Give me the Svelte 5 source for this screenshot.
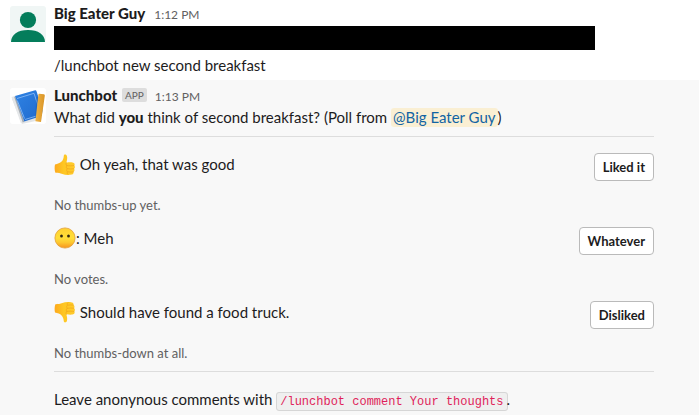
<script>
  const options = [
    { icon: 'up', label: ' Oh yeah, that was good', action: 'Liked it', votes: 'No thumbs-up yet.' },
    { icon: 'face', label: ': Meh', action: 'Whatever', votes: 'No votes.' },
    { icon: 'down', label: ' Should have found a food truck.', action: 'Disliked', votes: 'No thumbs-down at all.' }
  ];
</script>

{#snippet thumb(down)}
  <svg class="emoji" class:up={!down} viewBox="0 0 22 22" aria-hidden="true">
    <defs>
      <linearGradient id={down ? 'skinDown' : 'skinUp'} x1="0" y1="0" x2="1" y2="0">
        <stop offset="0" stop-color="#fda91e" />
        <stop offset=".45" stop-color="#fec723" />
        <stop offset="1" stop-color="#ffca2c" />
      </linearGradient>
    </defs>
    <g transform={down ? 'matrix(1 0 0 -1 0 22)' : undefined}>
      <path
        fill="url(#{down ? 'skinDown' : 'skinUp'})"
        d="M1 10.4C3.6 9.9 6.1 9.2 7.6 7.6C9 6 9.7 4 9.8 1.7C9.9.1 12.2.1 12.9 2C13.6 4.1 13 6.5 12.3 8.7C14.3 8.3 17 8.2 18.5 8.4C20.7 8.7 21.2 10.7 20.1 11.5C21.3 12.3 21.2 14 20 14.8C20.9 15.7 20.6 17.4 19.4 17.9C20 19 19.2 20.2 17.9 20.4C14.7 21.2 11 21 8.4 19.9C6.3 19 4.2 18.8 1.4 18.7C.5 16.6.4 12.9 1 10.4Z"
      />
      <path fill="none" stroke="#efa51a" stroke-width=".7" stroke-linecap="round"
        d="M12.3 8.7C11.7 9.5 11.7 10.8 12.7 11.4M13 11.6C15.4 12 18 11.9 20 11.5M12.7 11.6C12 12.5 12.2 14 13.1 14.7C15.3 15.1 17.9 15.1 19.8 14.8M13 14.9C12.4 15.9 12.6 17.2 13.4 17.8C15.5 18.2 17.7 18.1 19.3 17.9M13.4 18C13 18.7 13.1 19.7 13.9 20.3" />
    </g>
  </svg>
{/snippet}

{#snippet face()}
  <svg class="emoji" viewBox="0 0 22 22" aria-hidden="true">
    <defs>
      <linearGradient id="face" x1="0" y1="0" x2="0" y2="1">
        <stop offset="0" stop-color="#ffd02f" />
        <stop offset=".5" stop-color="#ffde3a" />
        <stop offset=".72" stop-color="#fdc830" />
        <stop offset="1" stop-color="#f7931e" />
      </linearGradient>
    </defs>
    <circle cx="11" cy="11" r="10.1" fill="url(#face)" stroke="#e2a03a" stroke-width=".8" />
    <ellipse cx="7.5" cy="9" rx="1.4" ry="1.6" fill="#302511" />
    <ellipse cx="14.5" cy="9" rx="1.4" ry="1.6" fill="#302511" />
  </svg>
{/snippet}

<main>
  <article class="message first">
    <svg class="avatar" viewBox="0 0 36 36" aria-hidden="true">
      <rect width="36" height="36" rx="3" fill="#f0f6f5" />
      <circle cx="18" cy="14" r="8.1" fill="#047d5b" />
      <path fill="#047d5b" d="M1 36C1.2 28.5 7.7 24 18 24S34.8 28.5 35 36Z" />
    </svg>
    <div class="body">
      <header><b>Big Eater Guy</b><time>1:12 PM</time></header>
      <div class="redacted"></div>
      <p class="command">/lunchbot new second breakfast</p>
    </div>
  </article>

  <article class="message bot">
    <svg class="avatar" viewBox="0 0 36 36" aria-hidden="true">
      <defs>
        <linearGradient id="cover" x1="0" y1="0" x2="1" y2="1">
          <stop offset="0" stop-color="#2f83e4" />
          <stop offset="1" stop-color="#1f68cc" />
        </linearGradient>
        <linearGradient id="pencil" x1="0" y1="0" x2="1" y2="0">
          <stop offset="0" stop-color="#efb448" />
          <stop offset="1" stop-color="#d99425" />
        </linearGradient>
        <clipPath id="tile"><rect width="36" height="36" rx="3" /></clipPath>
      </defs>
      <g clip-path="url(#tile)">
        <rect width="36" height="36" fill="#fff" />
        <path fill="#b7bbc0" opacity=".4" d="M2 11L12 36L35 31L34 9Z" />
        <path fill="#e5e7e9" d="M1.5 9L5 8L14 33L11 35.5Z" />
        <path fill="#a5abb1" d="M4.2 9L5.4 8.4L14.3 33.7L12.7 34.6Z" />
        <path fill="url(#cover)" d="M5 8L25.2 2.3Q26 2 26.4 3L34.4 27L14.3 33.6Z" />
        <path fill="none" stroke="#9ec8fa" stroke-width=".7" d="M7 10.5L24 5.3L31 26.6L15 31.5M7.3 12.5L14.5 30.5" />
        <path fill="#1d58aa" d="M26.5 9L30 9L29 31L25 30Z" opacity=".4" />
        <path fill="#fff" d="M34.8 6L36 6V36L31 33Z" />
        <path fill="url(#pencil)" d="M29.2 5.7L33.9 6.2Q35 6.4 34.8 7.7L31 34L25.4 33.2L28.4 6.6Q28.5 5.6 29.2 5.7Z" />
      </g>
    </svg>
    <div class="body">
      <header><b>Lunchbot</b><span class="app">APP</span><time>1:13 PM</time></header>
      <p class="question">What did <strong>you</strong> think of second breakfast? (Poll from <span class="mention">@Big Eater Guy</span>)</p>
      <hr />
      {#each options as option}
        <section class="option">
          <div class="choice">
            <p>{#if option.icon === 'face'}{@render face()}{:else}{@render thumb(option.icon === 'down')}{/if}{option.label}</p>
            <button type="button">{option.action}</button>
          </div>
          <p class="votes">{option.votes}</p>
        </section>
      {/each}
      <hr class="closing" />
      <p class="hint">Leave anonynous comments with <code>/lunchbot comment Your thoughts</code>.</p>
    </div>
  </article>
</main>

<style>
  :global(body) { background: #fff; }
  main {
    height: 418px;
    overflow: hidden;
    font: 15px/22px Lato, sans-serif;
    color: #1d1c1d;
  }
  p { margin: 0; white-space: pre; }
  .message { display: flex; gap: 8px; padding-left: 10px; box-sizing: border-box; }
  .first { height: 80px; padding-top: 3px; }
  .bot { height: 335px; padding-top: 6px; background: #f8f8f8; }
  .avatar { width: 36px; height: 36px; margin-top: 3px; flex: none; }
  .bot .avatar { margin-top: 2px; }
  .body { width: 600px; }
  header { display: flex; align-items: baseline; height: 20px; }
  .first header { height: 23px; line-height: 20px; }
  .bot header { line-height: 18px; }
  header b { font-weight: 900; }
  time { margin-left: 9px; font-size: 12px; color: #616061; }
  .app {
    align-self: flex-start;
    margin: 2px -1px 0 5px;
    padding: 0 3px;
    border-radius: 2px;
    background: #dddddd;
    color: #616061;
    font-size: 10px;
    line-height: 14px;
  }
  .redacted { width: 541px; height: 24px; background: #000; }
  .command { margin-top: 4px; }
  strong { font-weight: 900; }
  .mention { padding: 0 2px 1px; border-radius: 3px; background: #faefd3; color: #1264a3; }
  hr { height: 1px; margin: 8px 0 16px; border: 0; background: #dddddd; }
  .option { height: 74px; }
  .choice { display: flex; justify-content: space-between; align-items: flex-start; height: 41px; }
  .choice p { display: flex; }
  .emoji { width: 22px; height: 22px; flex: none; }
  .emoji.up { margin-top: 1px; }
  button {
    height: 28px;
    padding: 0 8px;
    border: 1px solid #bababa;
    border-radius: 4px;
    background: #fff;
    color: #1d1c1d;
    font: 700 13px/26px Lato, sans-serif;
  }
  .votes { font-size: 13px; color: #616061; }
  .closing { margin: -4px 0 16px; }
  code {
    padding: 2px 3px 1px;
    margin-right: -1px;
    border: 1px solid #d6d6d6;
    border-radius: 3px;
    background: #efefef;
    color: #e01e5a;
    font: 12px/18px "Liberation Mono", monospace;
  }
</style>
